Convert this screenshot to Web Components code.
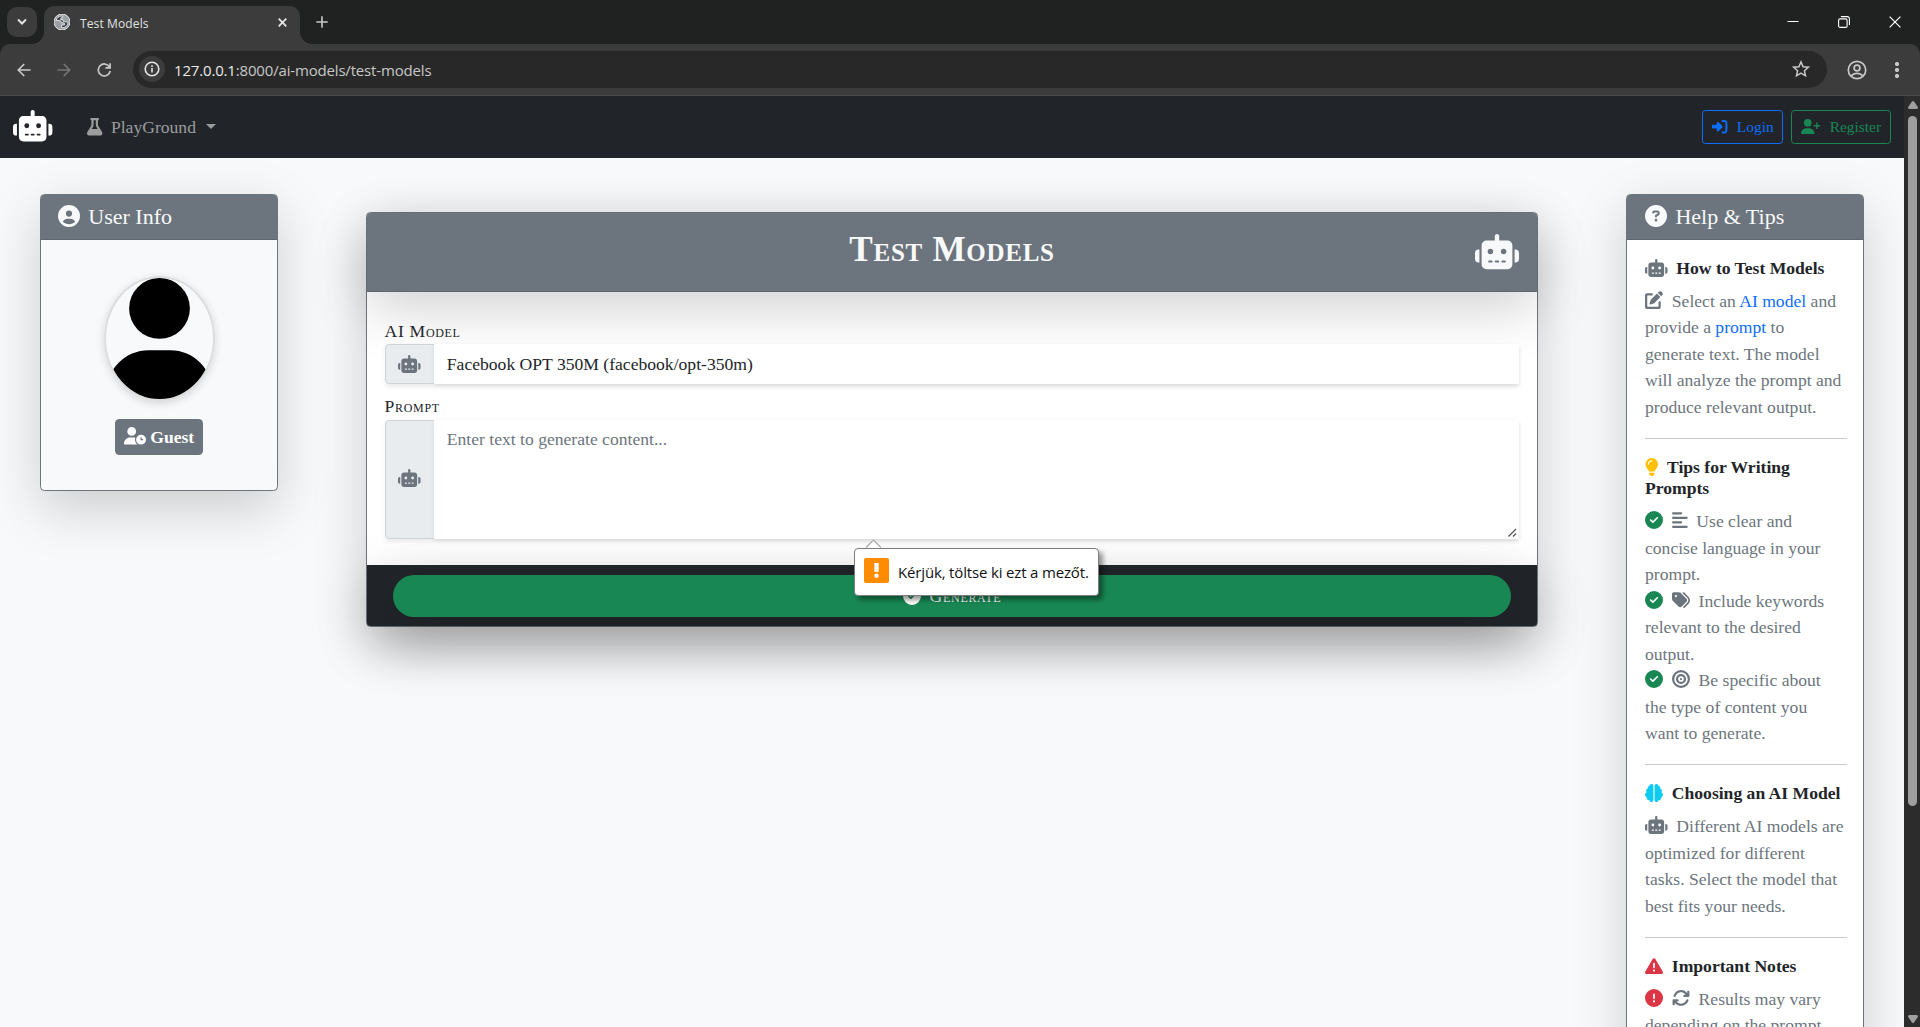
<!DOCTYPE html>
<html lang="hu">
<head>
<meta charset="utf-8">
<title>Test Models</title>
<style>
  html { font-size: 17.6px; }
  body { margin: 0; width: 1920px; height: 1027px; overflow: hidden; background: #f8f9fa; color: #212529;
         font: 1rem/1.5 "Liberation Serif", "Times New Roman", serif; }
</style>
</head>
<body>
<app-window></app-window>
<script>
const ICONS = {
  robot: [640, "M320 0c17.7 0 32 14.3 32 32l0 64 120 0c39.8 0 72 32.2 72 72l0 272c0 39.8-32.2 72-72 72l-304 0c-39.8 0-72-32.2-72-72l0-272c0-39.8 32.2-72 72-72l120 0 0-64c0-17.7 14.3-32 32-32zM208 384c-8.8 0-16 7.2-16 16s7.2 16 16 16l32 0c8.8 0 16-7.2 16-16s-7.2-16-16-16l-32 0zm96 0c-8.8 0-16 7.2-16 16s7.2 16 16 16l32 0c8.8 0 16-7.2 16-16s-7.2-16-16-16l-32 0zm96 0c-8.8 0-16 7.2-16 16s7.2 16 16 16l32 0c8.8 0 16-7.2 16-16s-7.2-16-16-16l-32 0zM264 256a40 40 0 1 0 -80 0 40 40 0 1 0 80 0zm152 40a40 40 0 1 0 0-80 40 40 0 1 0 0 80zM48 224l16 0 0 192-16 0c-26.5 0-48-21.5-48-48l0-96c0-26.5 21.5-48 48-48zm544 0c26.5 0 48 21.5 48 48l0 96c0 26.5-21.5 48-48 48l-16 0 0-192 16 0z"],
  "circle-user": [512, "M399 384.2C376.9 345.8 335.4 320 288 320H224c-47.4 0-88.9 25.8-111 64.2c35.2 39.2 86.2 63.8 143 63.8s107.8-24.7 143-63.8zM0 256a256 256 0 1 1 512 0A256 256 0 1 1 0 256zm256 16a72 72 0 1 0 0-144 72 72 0 1 0 0 144z"],
  question: [512, "M256 512A256 256 0 1 0 256 0a256 256 0 1 0 0 512zM169.8 165.3c7.9-22.3 29.1-37.3 52.8-37.3h58.3c34.9 0 63.1 28.3 63.1 63.1c0 22.6-12.1 43.5-31.7 54.8L280 264.4c-.2 13-10.9 23.6-24 23.6c-13.3 0-24-10.7-24-24V250.5c0-8.6 4.6-16.5 12.1-20.8l44.3-25.4c4.7-2.7 7.6-7.7 7.6-13.1c0-8.4-6.8-15.1-15.1-15.1H222.6c-3.4 0-6.4 2.1-7.5 5.3l-.4 1.2c-4.4 12.5-18.2 19-30.6 14.6s-19-18.2-14.6-30.6l.4-1.2zM224 352a32 32 0 1 1 64 0 32 32 0 1 1 -64 0z"],
  check: [512, "M256 512A256 256 0 1 0 256 0a256 256 0 1 0 0 512zM369 209L241 337c-9.4 9.4-24.6 9.4-33.9 0l-64-64c-9.4-9.4-9.4-24.6 0-33.9s24.6-9.4 33.9 0l47 47L335 175c9.4-9.4 24.6-9.4 33.9 0s9.4 24.6 0 33.9z"],
  exclamation: [512, "M256 512A256 256 0 1 0 256 0a256 256 0 1 0 0 512zm0-384c13.3 0 24 10.7 24 24V264c0 13.3-10.7 24-24 24s-24-10.7-24-24V152c0-13.3 10.7-24 24-24zM224 352a32 32 0 1 1 64 0 32 32 0 1 1 -64 0z"],
  warning: [512, "M256 32c14.2 0 27.3 7.5 34.5 19.8l216 368c7.3 12.4 7.3 27.7 .2 40.1S486.3 480 472 480H40c-14.3 0-27.6-7.7-34.7-20.1s-7-27.8 .2-40.1l216-368C228.7 39.5 241.8 32 256 32zm0 128c-13.3 0-24 10.7-24 24V296c0 13.3 10.7 24 24 24s24-10.7 24-24V184c0-13.3-10.7-24-24-24zm32 224a32 32 0 1 0 -64 0 32 32 0 1 0 64 0z"],
  edit: [512, "M471.6 21.7c-21.9-21.9-57.3-21.9-79.2 0L362.3 51.7l97.9 97.9 30.1-30.1c21.9-21.9 21.9-57.3 0-79.2L471.6 21.7zm-299.2 220c-6.1 6.1-10.8 13.6-13.5 21.9l-29.6 88.8c-2.9 8.6-.6 18.1 5.8 24.6s15.9 8.7 24.6 5.8l88.8-29.6c8.2-2.7 15.7-7.4 21.9-13.5L437.7 172.3 339.7 74.3 172.4 241.7zM60 64C25 64 0 87 0 124V452c0 35 25 60 60 60H388c35 0 60-25 60-60V320c0-17.7-14.3-32-32-32s-32 14.3-32 32v116c0 7-5 12-12 12H76c-7 0-12-5-12-12V140c0-7 5-12 12-12h116c17.7 0 32-14.3 32-32s-14.3-32-32-32H60z"],
  bulb: [384, "M272 384c9.6-31.9 29.5-59.1 49.2-86.2c5.2-7.1 10.4-14.2 15.4-21.4c19.8-28.5 31.4-63 31.4-100.3C368 78.8 289.2 0 192 0S16 78.8 16 176c0 37.3 11.6 71.9 31.4 100.3c5 7.2 10.2 14.3 15.4 21.4c19.8 27.1 39.7 54.4 49.2 86.2H272zM192 512c44.2 0 80-35.8 80-80V416H112v16c0 44.2 35.8 80 80 80zM112 176c0 8.8-7.2 16-16 16s-16-7.2-16-16c0-61.9 50.1-112 112-112c8.8 0 16 7.2 16 16s-7.2 16-16 16c-44.2 0-80 35.8-80 80z"],
  align: [448, "M288 64c0 17.7-14.3 32-32 32H32C14.3 96 0 81.7 0 64S14.3 32 32 32H256c17.7 0 32 14.3 32 32zm0 256c0 17.7-14.3 32-32 32H32c-17.7 0-32-14.3-32-32s14.3-32 32-32H256c17.7 0 32 14.3 32 32zM0 192c0-17.7 14.3-32 32-32H416c17.7 0 32 14.3 32 32s-14.3 32-32 32H32c-17.7 0-32-14.3-32-32zM448 448c0 17.7-14.3 32-32 32H32c-17.7 0-32-14.3-32-32s14.3-32 32-32H416c17.7 0 32 14.3 32 32z"],
  tags: [512, "M345 39.1L472.8 168.4c52.4 53 52.4 138.2 0 191.2L360.8 472.9c-9.3 9.4-24.5 9.5-33.9 .2s-9.5-24.5-.2-33.9L438.6 325.9c33.9-34.3 33.9-89.4 0-123.7L310.9 72.9c-9.3-9.4-9.2-24.6 .2-33.9s24.6-9.2 33.9 .2zM0 229.5V80C0 53.5 21.5 32 48 32H197.5c17 0 33.3 6.7 45.3 18.7l168 168c25 25 25 65.5 0 90.5L277.3 442.7c-25 25-65.5 25-90.5 0l-168-168C6.7 262.7 0 246.5 0 229.5zM144 144a32 32 0 1 0 -64 0 32 32 0 1 0 64 0z"],
  bullseye: [512, "M448 256A192 192 0 1 0 64 256a192 192 0 1 0 384 0zM0 256a256 256 0 1 1 512 0A256 256 0 1 1 0 256zm256 80a80 80 0 1 0 0-160 80 80 0 1 0 0 160zm0-224a144 144 0 1 1 0 288 144 144 0 1 1 0-288zM224 256a32 32 0 1 1 64 0 32 32 0 1 1 -64 0z"],
  brain: [512, "M184 0c30.9 0 56 25.1 56 56V456c0 30.9-25.1 56-56 56c-28.9 0-52.7-21.9-55.7-50.1c-5.2 1.4-10.7 2.1-16.3 2.1c-35.3 0-64-28.7-64-64c0-7.4 1.3-14.6 3.6-21.2C21.4 367.4 0 338.2 0 304c0-31.9 18.7-59.5 45.8-72.3C37.1 220.8 32 207 32 192c0-30.7 21.6-56.3 50.4-62.6C80.8 123.9 80 118 80 112c0-29.9 20.6-55.1 48.3-62.1C131.3 21.9 155.1 0 184 0zM328 0c28.9 0 52.6 21.9 55.7 49.9c27.8 7 48.3 32.1 48.3 62.1c0 6-.8 11.9-2.4 17.4c28.8 6.2 50.4 31.9 50.4 62.6c0 15-5.1 28.8-13.8 39.7C493.3 244.5 512 272.1 512 304c0 34.2-21.4 63.4-51.6 74.8c2.3 6.6 3.6 13.8 3.6 21.2c0 35.3-28.7 64-64 64c-5.6 0-11.1-.7-16.3-2.1c-3 28.2-26.8 50.1-55.7 50.1c-30.9 0-56-25.1-56-56V56c0-30.9 25.1-56 56-56z"],
  sync: [512, "M105.1 202.6c7.7-21.8 20.2-42.3 37.8-59.8c62.5-62.5 163.8-62.5 226.3 0L386.3 160H352c-17.7 0-32 14.3-32 32s14.3 32 32 32H463.5h.4c17.7 0 32-14.3 32-32V80c0-17.7-14.3-32-32-32s-32 14.3-32 32v35.2L414.4 97.6c-87.5-87.5-229.3-87.5-316.8 0C73.2 122 55.6 150.7 44.8 181.4c-5.9 16.7 2.9 34.9 19.5 40.8s34.9-2.9 40.8-19.5zM39 289.3c-5 1.5-9.8 4.2-13.7 8.2c-4 4-6.7 8.8-8.1 14c-.3 1.2-.6 2.5-.8 3.8c-.3 1.7-.4 3.4-.4 5.1V432c0 17.7 14.3 32 32 32s32-14.3 32-32V396.9l17.6 17.5c87.5 87.4 229.3 87.4 316.7 0c24.4-24.4 42.1-53.1 52.9-83.7c5.9-16.7-2.9-34.9-19.5-40.8s-34.9 2.9-40.8 19.5c-7.7 21.8-20.2 42.3-37.8 59.8c-62.5 62.5-163.8 62.5-226.3 0l-.1-.1L125.6 352H160c17.7 0 32-14.3 32-32s-14.3-32-32-32H48.4c-1.6 0-3.2 .1-4.8 .3s-3.1 .5-4.6 1z"],
  flask: [448, "M288 0H160 128C110.3 0 96 14.3 96 32s14.3 32 32 32V196.8c0 11.8-3.3 23.5-9.5 33.5L10.3 406.2C3.6 417.2 0 429.7 0 442.6C0 480.9 31.1 512 69.4 512H378.6c38.3 0 69.4-31.1 69.4-69.4c0-12.8-3.6-25.4-10.3-36.4L329.5 230.4c-6.2-10.1-9.5-21.7-9.5-33.5V64c17.7 0 32-14.3 32-32s-14.3-32-32-32H288zM192 196.8V64h64V196.8c0 23.7 6.6 46.9 19 67.1L309.5 320h-171L173 263.9c12.4-20.2 19-43.4 19-67.1z"],
  login: [512, "M217.9 105.9L340.7 228.7c7.2 7.2 11.3 17.1 11.3 27.3s-4.1 20.1-11.3 27.3L217.9 406.1c-6.4 6.4-15 9.9-24 9.9c-18.7 0-33.9-15.2-33.9-33.9l0-62.1L32 320c-17.7 0-32-14.3-32-32l0-64c0-17.7 14.3-32 32-32l128 0 0-62.1c0-18.7 15.2-33.9 33.9-33.9c9 0 17.6 3.6 24 9.9zM352 416l64 0c17.7 0 32-14.3 32-32l0-256c0-17.7-14.3-32-32-32l-64 0c-17.7 0-32-14.3-32-32s14.3-32 32-32l64 0c53 0 96 43 96 96l0 256c0 53-43 96-96 96l-64 0c-17.7 0-32-14.3-32-32s14.3-32 32-32z"],
  "user-plus": [640, "M96 128a128 128 0 1 1 256 0A128 128 0 1 1 96 128zM0 482.3C0 383.8 79.8 304 178.3 304h91.4C368.2 304 448 383.8 448 482.3c0 16.4-13.3 29.7-29.7 29.7H29.7C13.3 512 0 498.7 0 482.3zM504 312V248H440c-13.3 0-24-10.7-24-24s10.7-24 24-24h64V136c0-13.3 10.7-24 24-24s24 10.7 24 24v64h64c13.3 0 24 10.7 24 24s-10.7 24-24 24H552v64c0 13.3-10.7 24-24 24s-24-10.7-24-24z"],
  "user-clock": [640, "M224 0a128 128 0 1 1 0 256A128 128 0 1 1 224 0zM178.3 304h91.4c20.6 0 40.4 3.5 58.8 9.9C323 331 320 349.1 320 368c0 59.5 29.5 112.1 74.8 144H29.7C13.3 512 0 498.7 0 482.3C0 383.8 79.8 304 178.3 304zM352 368a144 144 0 1 1 288 0 144 144 0 1 1 -288 0zm144-80c-8.8 0-16 7.2-16 16v64c0 8.8 7.2 16 16 16h48c8.8 0 16-7.2 16-16s-7.2-16-16-16H512V304c0-8.8-7.2-16-16-16z"]
};

function define(name, html) {
  const tpl = document.createElement("template");
  tpl.innerHTML = html;
  customElements.define(name, class extends HTMLElement {
    constructor() {
      super();
      this.attachShadow({ mode: "open" }).append(tpl.content.cloneNode(true));
    }
  });
}

customElements.define("fa-icon", class extends HTMLElement {
  connectedCallback() {
    if (this.shadowRoot) return;
    const [w, d] = ICONS[this.getAttribute("name")];
    this.attachShadow({ mode: "open" }).innerHTML =
      `<style>:host{display:inline-block;line-height:1;vertical-align:-.115em;height:1em}svg{display:block;height:1em;width:${w / 512}em;fill:currentColor}</style>
       <svg viewBox="0 0 ${w} 512"><path d="${d}"/></svg>`;
  }
});

define("browser-chrome", `
<style>
  :host { display: block; height: 96px; background: #202221; font-family: "Open Sans", "Noto Sans", sans-serif; color: #e3e3e3; }
  * { box-sizing: border-box; }
  svg { display: block; fill: none; stroke: currentColor; }
  .tabs { height: 44px; display: flex; padding-left: 7px; }
  .search { width: 30px; height: 30px; margin-top: 7px; border-radius: 10px; background: #3c3c3c; display: grid; place-items: center; }
  .tab { position: relative; width: 256px; height: 38px; margin: 6px 0 0 7px; border-radius: 10px 10px 0 0; background: #3c3c3c;
         display: flex; align-items: center; padding: 0 13px 6px 10px; font-size: 12px; letter-spacing: .12px; }
  .tab::before, .tab::after { content: ""; position: absolute; bottom: 0; width: 12px; height: 12px; }
  .tab::before { left: -12px; background: radial-gradient(circle at 0 0, transparent 11.6px, #3c3c3c 12.2px); }
  .tab::after { right: -12px; background: radial-gradient(circle at 100% 0, transparent 11.6px, #3c3c3c 12.2px); }
  .title { flex: 1; margin: 3px 0 0 10px; }
  .plus { margin: 16px 0 0 16px; }
  .win { margin-left: auto; display: flex; gap: 39px; padding: 16px 19px 0 0; color: #fff; }
  .bar { height: 52px; background: #3c3c3c; border-bottom: 1px solid #4b4b4c; border-radius: 10px 10px 0 0; display: flex; align-items: center; padding: 0 20px 0 17px; color: #c7c7c7; }
  .nav { display: flex; gap: 26px; margin-top: 1px; }
  .omni { width: 1694px; height: 37px; margin: 0 0 1px 21px; border-radius: 19px; background: #282828; display: flex; align-items: center; padding: 0 17px 0 6px; }
  .info { width: 26px; height: 26px; border-radius: 50%; background: #3c3c3c; display: grid; place-items: center; color: #e3e3e3; }
  .url { flex: 1; margin: 2px 0 0 9px; font-size: 15px; letter-spacing: -.17px; }
  .url b { font-weight: 400; color: #e8e8e8; }
</style>
<div class="tabs">
  <div class="search"><svg width="10" height="8" viewBox="0 0 10 8" stroke-width="2"><path d="M1 1.5l4 4 4-4"/></svg></div>
  <div class="tab">
    <svg width="16" height="16" viewBox="0 0 16 16" stroke="none"><circle cx="8" cy="8" r="8" fill="#9aa0a6"/><path d="M7.500 2C5 2 2.600 3.700 2 6.400h3.400c1.200 0 1.700.6 1.700 1.500v.9h2.200c.8 0 1.200.5 1.200 1.200v.9H7.600v2.900c3.300.4 6.300-2.200 6.400-5.300-.6-.7-1.400-.7-2.200-.7h-1.500c-.9 0-1.300-.5-1.300-1.300V5.600H6.800v-1c0-.7.4-1 1-1h.9V2.100z" fill="#3f4347"/></svg>
    <span class="title">Test Models</span>
    <svg width="9" height="9" viewBox="0 0 9 9" stroke-width="1.8"><path d="M.7.7l7.600 7.600M8.300.7L.7 8.300"/></svg>
  </div>
  <svg class="plus" width="12" height="12" viewBox="0 0 12 12" stroke-width="1.600" style="color:#c7c7c7"><path d="M6 .3v11.400M.3 6h11.400"/></svg>
  <div class="win">
    <svg width="12" height="12" viewBox="0 0 12 12"><path d="M.5 5.500h11"/></svg>
    <svg width="12" height="12" viewBox="0 0 12 12" stroke-width="1.100"><rect x=".6" y="2.900" width="8.500" height="8.500" rx="1.500"/><path d="M2.900.6h6.300a2.200 2.200 0 0 1 2.200 2.200v6.300"/></svg>
    <svg width="12" height="12" viewBox="0 0 12 12" stroke-width="1.200"><path d="M.6.6l10.800 10.800M11.400.6L.6 11.400"/></svg>
  </div>
</div>
<div class="bar">
  <div class="nav">
    <svg width="14" height="14" viewBox="0 0 14 14" stroke-width="1.700"><path d="M13.500 7H1.500M7.200 1L1.300 7l5.900 6"/></svg>
    <svg width="14" height="14" viewBox="0 0 14 14" stroke-width="1.700" style="color:#767676"><path d="M.5 7h12M6.800 1l5.900 6-5.900 6"/></svg>
    <svg width="15" height="14" viewBox="0 0 15 14" stroke-width="1.700"><path d="M12.600 4.200A6 6 0 1 0 13.200 8M13.100.2v4.600H8.400"/></svg>
  </div>
  <div class="omni">
    <span class="info"><svg width="16" height="16" viewBox="0 0 16 16" stroke-width="1.600"><circle cx="8" cy="8" r="6.800"/><path d="M8 7v4.600M8 4.300v1.700"/></svg></span>
    <span class="url"><b>127.0.0.1</b>:8000/ai-models/test-models</span>
    <svg width="18" height="18" viewBox="0 0 18 18" stroke-width="1.500"><path d="M9 1.900l2.100 4.800 5.200.5-3.900 3.500 1.100 5.100L9 13.100l-4.500 2.700 1.100-5.100-3.900-3.500 5.200-.5z"/></svg>
  </div>
  <svg width="20" height="20" viewBox="0 0 20 20" stroke-width="1.700" style="margin:1px 0 0 20px"><circle cx="10" cy="10" r="8.700"/><circle cx="10" cy="8" r="2.900"/><path d="M4.200 16c1.500-1.900 3.500-2.700 5.800-2.700s4.300.8 5.800 2.700"/></svg>
  <svg width="4" height="16" viewBox="0 0 4 16" stroke="none" style="margin-left:28px"><g fill="#c7c7c7"><circle cx="2" cy="2" r="1.700"/><circle cx="2" cy="8" r="1.700"/><circle cx="2" cy="14" r="1.700"/></g></svg>
</div>`);

define("scroll-bar", `
<style>
  :host { display: flex; flex-direction: column; align-items: center; width: 16px; background: #2c2c2c; padding: 5px 0 4px; box-sizing: border-box; }
  svg { display: block; fill: #9f9f9f; margin-left: 1px; }
  i { width: 9px; height: 690px; margin: 7px 0 auto 1px; border-radius: 5px; background: #9f9f9f; }
</style>
<svg width="10" height="8"><path d="M4 .6q1-1.200 2 0L9.800 6q.6 1.700-1 2H1.200Q-.4 7.700.2 6z"/></svg>
<i></i>
<svg width="10" height="8"><path d="M4 7.400q1 1.200 2 0L9.800 2q.6-1.700-1-2H1.200Q-.4.3.2 2z"/></svg>`);

define("outline-button", `
<style>
  :host { display: block; border: 1px solid currentColor; border-radius: .2rem; padding: .25rem .5rem; font-size: .875rem; line-height: 1.5; white-space: nowrap; }
  ::slotted(fa-icon) { margin-right: 5.400px; }
</style><slot></slot>`);

define("site-nav", `
<style>
  :host { display: flex; align-items: center; height: 62px; padding: 0 .75rem; box-sizing: border-box; background: #212529; color: #9a9c9e; }
  .brand { font-size: 31.500px; color: #fff; margin-bottom: 2px; }
  .menu { display: flex; align-items: center; margin-left: 34.600px; }
  .menu fa-icon { margin-right: 8.400px; margin-bottom: 0; }
  .caret { border: 5px solid transparent; border-top-color: currentColor; border-bottom: 0; margin: 0 0 1px 10px; }
  .right { display: flex; gap: 8px; margin: 0 0 0 auto; }
</style>
<fa-icon class="brand" name="robot"></fa-icon>
<div class="menu"><fa-icon name="flask"></fa-icon><span>PlayGround</span><i class="caret"></i></div>
<div class="right">
  <outline-button style="color:#0d6efd"><fa-icon name="login"></fa-icon> Login</outline-button>
  <outline-button style="color:#198754"><fa-icon name="user-plus"></fa-icon> Register</outline-button>
</div>`);

define("side-card", `
<style>
  :host { display: block; box-sizing: border-box; width: 238px; border: 1px solid #6c757d; border-radius: .25rem; background: var(--card-bg, #fff); box-shadow: 0 1rem 3rem rgba(0,0,0,.175); }
  header { display: flex; align-items: center; height: 44px; padding: 0 1rem; background: #6c757d; color: #f8f9fa; border-bottom: 1px solid #5f676e; font-size: 1.25rem; line-height: 1.2; border-radius: 3px 3px 0 0; }
  .body { padding: 1rem 16.500px 1rem 18px; }
</style>
<header><slot name="title"></slot></header>
<div class="body"><slot></slot></div>`);

define("user-panel", `
<style>
  :host { display: block; }
  side-card { --card-bg: #f8f9fa; height: 297px; }
  [slot=title] { display: flex; gap: 8px; align-items: center; margin-left: -.3px; }
  [slot=title] fa-icon { margin-top: -2px; }
  .col { display: flex; flex-direction: column; align-items: center; padding-top: 18px; margin-left: -1.500px; }
  .avatar { width: 107px; height: 121.600px; border: 2px solid #dcdddd; border-radius: 50%; overflow: hidden; box-shadow: 0 .125rem .5rem rgba(0,0,0,.15); }
  .avatar svg { display: block; width: 100%; height: 100%; }
  .badge { display: block; box-sizing: border-box; height: 36px; line-height: 36px; margin-top: 17.800px; padding: 0 .5rem; background: #6c757d; color: #fff; font-weight: 700; border-radius: .25rem; }
</style>
<side-card>
  <span slot="title"><fa-icon name="circle-user"></fa-icon><span>User Info</span></span>
  <div class="col">
    <div class="avatar"><svg viewBox="0 0 448 512"><path d="M224 256A128 128 0 1 0 224 0a128 128 0 1 0 0 256zm-45.700 48C79.800 304 0 383.800 0 482.300C0 498.700 13.300 512 29.700 512H418.300c16.400 0 29.700-13.300 29.700-29.700C448 383.800 368.200 304 269.700 304H178.300z"/></svg></div>
    <span class="badge"><fa-icon name="user-clock"></fa-icon> Guest</span>
  </div>
</side-card>`);

define("help-section", `
<style>
  :host { display: block; }
  :host(:not(:first-of-type)) { border-top: 1px solid #c8c9ca; margin-top: 1rem; padding-top: 1rem; }
  .head { font-weight: 700; line-height: 1.2; margin-bottom: 9px; }
  .text { color: #6c757d; line-height: 26.500px; padding-bottom: .4px; }
  ::slotted(fa-icon) { margin-right: .25rem; font-size: 18px; height: 17px; }
</style>
<div class="head"><slot name="icon"></slot> <slot name="head"></slot></div>
<div class="text"><slot></slot></div>`);

define("help-panel", `
<style>
  :host { display: block; }
  side-card { height: 1000px; }
  [slot=title] { display: flex; gap: .5rem; align-items: center; }
  [slot=title] fa-icon { margin-top: -2px; }
  a { color: #0d6efd; }
  p { margin: 0; }
  p fa-icon { margin-right: .25rem; font-size: 18px; }
  .ok { color: #198754; }
  .wrap-early { padding-right: 4px; }
</style>
<side-card>
  <span slot="title"><fa-icon name="question"></fa-icon><span>Help &amp; Tips</span></span>
  <help-section>
    <fa-icon slot="icon" name="robot" style="color:#6c757d"></fa-icon><span slot="head">How to Test Models</span>
    <p><fa-icon name="edit"></fa-icon> Select an <a>AI model</a> and provide a <a>prompt</a> to generate text. The model will analyze the prompt and produce relevant output.</p>
  </help-section>
  <help-section>
    <fa-icon slot="icon" name="bulb" style="color:#ffc107"></fa-icon><span slot="head">Tips for Writing Prompts</span>
    <p><fa-icon class="ok" name="check"></fa-icon> <fa-icon name="align"></fa-icon> Use clear and concise language in your prompt.</p>
    <p><fa-icon class="ok" name="check"></fa-icon> <fa-icon name="tags"></fa-icon> Include keywords relevant to the desired output.</p>
    <p class="wrap-early"><fa-icon class="ok" name="check"></fa-icon> <fa-icon name="bullseye"></fa-icon> Be specific about the type of content you want&nbsp;to generate.</p>
  </help-section>
  <help-section>
    <fa-icon slot="icon" name="brain" style="color:#0dcaf0"></fa-icon><span slot="head">Choosing an AI Model</span>
    <p><fa-icon name="robot"></fa-icon> Different AI models are optimized for different tasks. Select the model that best fits your needs.</p>
  </help-section>
  <help-section>
    <fa-icon slot="icon" name="warning" style="color:#dc3545"></fa-icon><span slot="head">Important Notes</span>
    <p><fa-icon name="exclamation" style="color:#dc3545"></fa-icon> <fa-icon name="sync"></fa-icon> Results may vary depending on the prompt</p>
  </help-section>
</side-card>`);

define("input-row", `
<style>
  :host { display: flex; position: relative; box-shadow: 0 .125rem .25rem rgba(0,0,0,.075); border-radius: .25rem; }
  .addon { box-sizing: border-box; width: 49px; display: grid; place-items: center; background: #e9ecef; color: #6c757d; border: 1px solid #ced4da; border-right: 0; border-radius: .25rem 0 0 .25rem; }
  .addon fa-icon { margin-bottom: var(--icon-lift, 0); font-size: 18px; }
  .field { flex: 1; background: #fff; padding: .375rem .75rem; box-shadow: 0 .125rem .25rem rgba(0,0,0,.075); line-height: 1.5; }
</style>
<div class="addon"><fa-icon name="robot"></fa-icon></div>
<div class="field"><slot></slot></div>`);

define("validation-tip", `
<style>
  :host { position: absolute; box-sizing: border-box; display: flex; align-items: flex-start; gap: 9px; width: 245px; height: 48px; padding: 9px 0 0 9px; background: #fff; border: 1px solid #7c7c7c; border-radius: 4px;
          box-shadow: 4px 4px 5px rgba(0,0,0,.4); color: #111; font: 15px/25px "Open Sans", "Noto Sans", sans-serif; letter-spacing: -.16px; white-space: nowrap; }
  .arrow { position: absolute; left: 10px; top: -10px; }
  span { padding-top: 2px; }
</style>
<svg class="arrow" width="17" height="10" viewBox="0 0 17 10"><path d="M1 9L8.500 1 16 9z" fill="#fff"/><path d="M1 8.500L8.500 1 16 8.500" fill="none" stroke="#a8a8a8" stroke-width="1.200"/></svg>
<svg width="25" height="25" viewBox="0 0 25 25"><rect width="25" height="25" rx="2" fill="#ff8c00"/><path d="M10.300 5h4.400v8.800h-4.400z" fill="#fff"/><circle cx="12.500" cy="17.700" r="2.200" fill="#fff"/></svg>
<span>Kérjük, töltse ki ezt a mezőt.</span>`);

define("model-card", `
<style>
  :host { display: flex; flex-direction: column; position: relative; box-sizing: border-box; width: 1172px; height: 415px; border: 1px solid #6c757d; border-radius: .25rem; background: #fff; box-shadow: 0 1rem 3rem rgba(0,0,0,.175); }
  header { box-sizing: border-box; flex: none; height: 79px; display: grid; grid-template-columns: 1fr auto 1fr; align-items: center; padding: 0 1rem; background: #6c757d; color: #f8f9fa; border-bottom: 1px solid #5f676e; border-radius: 3px 3px 0 0; box-shadow: 0 1rem 3rem rgba(0,0,0,.175); }
  h2 { grid-column: 2; margin: 0 0 3px; font-size: 2rem; line-height: 1.2; font-variant: small-caps; letter-spacing: .72px; }
  header fa-icon { font-size: 2rem; justify-self: end; }
  .body { flex: 1; min-height: 0; padding: 26px 1rem 0; }
  label { display: block; font-variant: small-caps; line-height: 26.400px; letter-spacing: .68px; }
  .prompt { color: #6c757d; height: 106.400px; margin-top: -1px; padding-bottom: 1px; box-sizing: border-box; }
  .first { margin-bottom: 9px; }
  .second { margin-top: 1px; --icon-lift: 2.500px; }
  .grip { position: absolute; right: 2px; bottom: 2px; }
  footer { flex: none; padding: 9.800px 26px 9px; background: #212529; border-radius: 0 0 3px 3px; box-shadow: 0 1rem 3rem rgba(0,0,0,.175); }
  .go { height: 42px; border-radius: 50rem; background: #198754; color: #fff; display: flex; align-items: center; justify-content: center; gap: .5rem; font-variant: small-caps; letter-spacing: .7px; box-shadow: 0 1rem 3rem rgba(0,0,0,.175); }
  .go fa-icon { font-size: 18px; margin-top: -1px; }
  validation-tip { left: 487px; top: 335px; }
</style>
<header><h2>Test Models</h2><fa-icon name="robot"></fa-icon></header>
<div class="body">
  <label>AI Model</label>
  <input-row class="first">Facebook OPT 350M (facebook/opt-350m)</input-row>
  <label>Prompt</label>
  <input-row class="second"><div class="prompt">Enter text to generate content...</div>
    <svg class="grip" width="9" height="9" viewBox="0 0 9 9"><path d="M.5 8.500l7.500-7.500M5 8.500l3-3" stroke="#555" stroke-width="1.300"/></svg></input-row>
</div>
<footer><div class="go"><fa-icon name="check"></fa-icon><span>Generate</span></div></footer>
<validation-tip></validation-tip>`);

define("app-window", `
<style>
  :host { display: flex; flex-direction: column; height: 1027px; }
  .view { flex: 1; min-height: 0; display: flex; }
  .page { width: 1904px; display: flex; flex-direction: column; overflow: hidden; }
  main { flex: 1; min-height: 0; display: flex; align-items: flex-start; justify-content: space-between; padding: 36px 40px 0; overflow: hidden; }
  site-nav { flex: none; }
  model-card { margin-top: 18px; }
</style>
<browser-chrome></browser-chrome>
<div class="view">
  <div class="page">
    <site-nav></site-nav>
    <main><user-panel></user-panel><model-card></model-card><help-panel></help-panel></main>
  </div>
  <scroll-bar></scroll-bar>
</div>`);
</script>
</body>
</html>
